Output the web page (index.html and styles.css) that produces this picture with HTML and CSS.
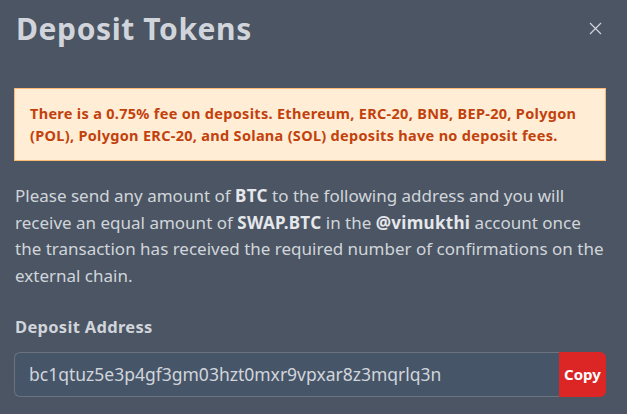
FILE: index.html
```html
<!DOCTYPE html>
<html lang="en">
<head>
  <meta charset="UTF-8">
  <title>Deposit Tokens</title>
  <meta name="viewport" content="width=device-width, initial-scale=1">
  <link rel="stylesheet" href="styles.css">
</head>
<body>
  <div class="modal">
    <div class="modal-header">
      <h2>Deposit Tokens</h2>
      <button class="close" aria-label="Close">
        <svg width="13" height="13" viewBox="0 0 13 13"><path d="M1 1L12 12M12 1L1 12" stroke="#d1d5db" stroke-width="1.2" fill="none"/></svg>
      </button>
    </div>

    <div class="alert">
      There is a 0.75% fee on deposits. Ethereum, ERC-20, BNB, BEP-20, Polygon (POL), Polygon ERC-20, and Solana (SOL) deposits have no deposit fees.
    </div>

    <p class="info">
      Please send any amount of <strong>BTC</strong> to the following address and you will receive an equal amount of <strong>SWAP.BTC</strong> in the <strong>@vimukthi</strong> account once the transaction has received the required number of confirmations on the external chain.
    </p>

    <label class="field-label">Deposit Address</label>
    <div class="copy-row">
      <input type="text" readonly value="bc1qtuz5e3p4gf3gm03hzt0mxr9vpxar8z3mqrlq3n">
      <button class="copy">Copy</button>
    </div>
  </div>
</body>
</html>
```

FILE: styles.css
```css
body { margin: 0; background: #4b5563; font-family: "Noto Sans", Lato, sans-serif; color: #d1d5db; }
.modal { padding: 8px 21px 0 14px; }
.modal-header { display: flex; justify-content: space-between; align-items: center; height: 40px; }
.modal-header h2 { margin: 0 0 0 2px; font-size: 30px; font-weight: 700; letter-spacing: 0.6px; color: #d1d5db; }
.close { background: none; border: none; padding: 0; margin-right: 4px; cursor: pointer; display: flex; }
.alert { margin-top: 40px; background: #ffedd5; border: 1px solid #fdba74; color: #c2410c; font-weight: 700; font-size: 14.5px; letter-spacing: 0.3px; line-height: 22px; padding: 13px 15px 14px; }
.info { margin: 22px 0 0 1px; font-size: 17px; line-height: 26.7px; }
.info strong { color: #e5e7eb; letter-spacing: 0.3px; }
.field-label { display: block; margin: 26px 0 0 1px; font-size: 16.5px; letter-spacing: 0.3px; line-height: 22px; font-weight: 700; }
.copy-row { display: flex; margin-top: 14px; height: 45px; }
.copy-row input { flex: 1; min-width: 0; box-sizing: border-box; background: #475569; border: 1px solid #6b7280; border-right: none; border-radius: 6px 0 0 6px; color: #d1d5db; font-family: inherit; font-size: 17.5px; padding: 0 14px; outline: none; }
.copy { background: #dc2626; color: #fff; border: none; border-radius: 0 6px 6px 0; width: 47px; padding: 0; font-family: inherit; font-size: 15px; font-weight: 700; cursor: pointer; }
```
